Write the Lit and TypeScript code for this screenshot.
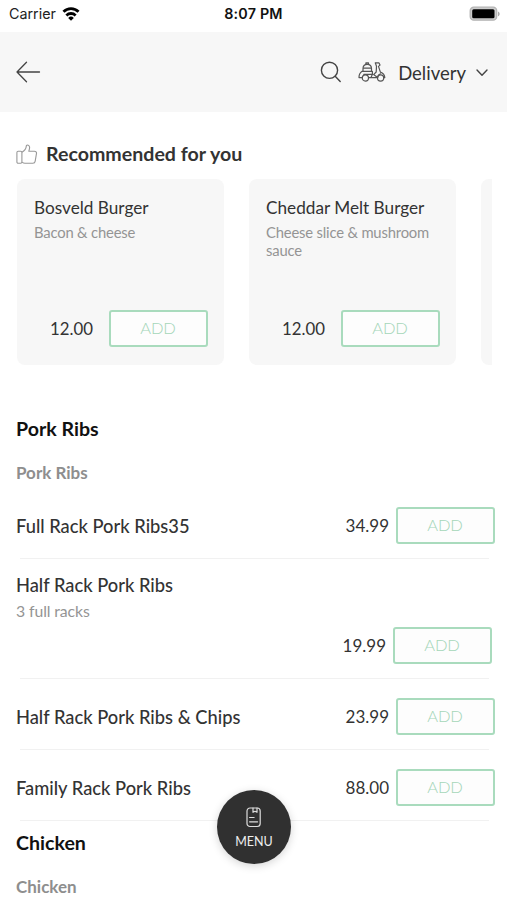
import { LitElement, html, css, svg, nothing } from "lit";
import { customElement, property } from "lit/decorators.js";

interface Dish {
  name: string;
  note?: string;
  price: string;
}

const recommended: Dish[] = [
  { name: "Bosveld Burger", note: "Bacon & cheese", price: "12.00" },
  { name: "Cheddar Melt Burger", note: "Cheese slice & mushroom sauce", price: "12.00" },
];

const ribs: Dish[] = [
  { name: "Full Rack Pork Ribs35", price: "34.99" },
  { name: "Half Rack Pork Ribs", note: "3 full racks", price: "19.99" },
  { name: "Half Rack Pork Ribs & Chips", price: "23.99" },
  { name: "Family Rack Pork Ribs", price: "88.00" },
];

const wifi = svg`<svg width="18" height="14" viewBox="0 0 20 16" fill="none" stroke="#000" stroke-width="3.2">
  <path d="M1.400 5.400a12 12 0 0 1 17.200 0"/><path d="M4.700 9.600a7.600 7.600 0 0 1 10.600 0"/>
  <path d="M10 15.800 6.800 12.500a4.500 4.500 0 0 1 6.400 0Z" fill="#000" stroke="none"/></svg>`;
const battery = svg`<svg width="32" height="16" viewBox="0 0 32 16">
  <rect x="1.200" y="1.200" width="26.500" height="13" rx="3.600" fill="#ccc" stroke="#b4b4b4" stroke-width="1.300"/>
  <rect x="3.200" y="3.200" width="22.300" height="9" rx="1.500" fill="#000"/><path d="M29 5.400c2.200.8 2.200 4 0 4.800z" fill="#aaa"/></svg>`;
const back = svg`<svg width="26" height="24" viewBox="0 0 26 24" fill="none" stroke="#444" stroke-width="1.3" stroke-linecap="round" stroke-linejoin="round">
  <path d="M24.500 12H2M11.500 2.300 2 12l9.500 9.700"/></svg>`;
const search = svg`<svg width="22" height="22" viewBox="0 0 22 22" fill="none" stroke="#444" stroke-width="1.4" stroke-linecap="round">
  <circle cx="9.500" cy="9.300" r="8.100"/><path d="m15.200 15.200 5.000 5.300"/></svg>`;
const scooter = svg`<svg width="28" height="20" viewBox="0 0 28 20" fill="none" stroke="#555" stroke-width="1.200" stroke-linecap="round" stroke-linejoin="round">
  <path d="M5 9V6.400C5 3.800 6.800 2.300 9.200 2.300s4.300 1.500 4.300 4.100V9M7.900 2.300V.900h2.600v1.400M5 6.200h8.500M4.200 9.300h10.200v3H5.800"/>
  <path d="M4.200 9.300C2.200 10.400 1 12.500 1 15.600h3.300M14.400 12.300l-1.400 3.300H10.600M13 15.600h6.600"/>
  <path d="M17.300.900h3.700l1 2.200-1.500 1.300 1.900 5.700c2.800.9 4.200 2.900 4.400 5.500h-1.200M17.300.900l1.200 3.300-.3 5.800-2.600 2.600 4 3c.3-2.100 1.300-3.200 2.800-3.800"/>
  <circle cx="7.400" cy="16" r="3.100"/><circle cx="22.600" cy="16" r="3.100"/></svg>`;
const chevron = svg`<svg width="12" height="8" viewBox="0 0 12 8" fill="none" stroke="#444" stroke-width="1.400" stroke-linecap="round" stroke-linejoin="round"><path d="m1 1 5 5.300L11 1"/></svg>`;
const thumb = svg`<svg width="22" height="21" viewBox="0 0 22 21" fill="none" stroke="#999" stroke-width="1.100" stroke-linejoin="round">
  <rect x=".900" y="7.200" width="5" height="12" rx="1.200"/>
  <path d="M5.900 8.200c3-1.400 4.200-3.700 4.500-6.600.8-1.200 3-.4 3.200 1.500.1 1.600-.4 2.800-.8 4.100h5.600c1.400 0 2.300 1 2.100 2.200l-1.300 7.700c-.2 1.400-1 2.100-2.300 2.100H9c-1.300 0-2.100-.4-3.100-1.100"/></svg>`;
const menuCard = svg`<svg width="16" height="21" viewBox="0 0 16 21" fill="none" stroke="#ddd" stroke-width="1.200" stroke-linecap="round" stroke-linejoin="round">
  <rect x="1" y="1" width="13.200" height="18.500" rx="3"/><path d="M7 1v4.300l2-1 2 1V1M3.600 10.500h4.500M3.600 14.800h8"/></svg>`;

@customElement("add-button")
export class AddButton extends LitElement {
  static styles = css`
    :host { display: block; flex: none; }
    .add {
      display: block; box-sizing: border-box; width: 99px; height: 37px; padding: 0 1px 0 0;
      border: 2px solid #a9dbbd; border-radius: 3px; background: #fdfdfd;
      color: #a5d6b9; font: 300 16.5px/33px Lato, sans-serif; letter-spacing: -.1px;
    }
  `;
  render() {
    return html`<button class="add">ADD</button>`;
  }
}

@customElement("dish-card")
export class DishCard extends LitElement {
  @property({ attribute: false }) dish?: Dish;
  static styles = css`
    :host {
      display: flex; flex-direction: column; flex: none; box-sizing: border-box;
      width: 207px; height: 186px; padding: 17px 16px 18px 17px;
      border-radius: 8px; background: #f7f7f7;
    }
    .name { font-size: 17.2px; line-height: 24px; color: #333; white-space: nowrap; }
    .note { margin-top: 4px; font-size: 14.8px; letter-spacing: -.18px; line-height: 17.5px; color: #949494; }
    .buy { display: flex; align-items: center; justify-content: flex-end; gap: 16px; margin-top: auto; }
    .price { font-size: 16.8px; color: #333; }
  `;
  render() {
    if (!this.dish) return nothing;
    return html`<div class="name">${this.dish.name}</div>
      <div class="note">${this.dish.note}</div>
      <div class="buy"><span class="price">${this.dish.price}</span><add-button></add-button></div>`;
  }
}

@customElement("dish-row")
export class DishRow extends LitElement {
  @property({ attribute: false }) dish?: Dish;
  static styles = css`
    :host { display: block; }
    .row { display: flex; align-items: center; justify-content: space-between; box-sizing: border-box; height: 70px; padding: 5px 12px 0 16px; }
    .tall { display: block; height: 119px; padding: 13px 15px 0 16px; }
    .name { font-size: 18.3px; font-weight: 500; line-height: 26px; color: #333; white-space: nowrap; }
    .note { font-size: 15.8px; letter-spacing: -.1px; line-height: 26px; color: #949494; }
    .buy { display: flex; align-items: center; justify-content: flex-end; gap: 7px; }
    .tall .buy { margin-top: 3px; }
    .price { font-size: 17px; color: #333; }
    .line { height: 1px; margin: 0 18px 0 20px; background: #f1f1f1; }
  `;
  render() {
    const d = this.dish;
    if (!d) return nothing;
    return html`<div class="row ${d.note ? "tall" : ""}">
        <div class="name">${d.name}</div>
        ${d.note ? html`<div class="note">${d.note}</div>` : nothing}
        <div class="buy"><span class="price">${d.price}</span><add-button></add-button></div>
      </div>
      <div class="line"></div>`;
  }
}

@customElement("app-root")
export class AppRoot extends LitElement {
  static styles = css`
    :host { display: block; position: relative; height: 900px; overflow: hidden; background: #fff; font-family: Lato, sans-serif; color: #333; }
    svg { display: block; flex: none; }
    .status { display: grid; grid-template-columns: 1fr auto 1fr; align-items: center; height: 28px; padding: 0 6px 4px 9px; font: 400 14.300px/20px Inter, sans-serif; color: #222; }
    .carrier { display: flex; align-items: center; gap: 6px; }
    .time { font-weight: 600; color: #111; margin-right: 3px; letter-spacing: .2px; }
    .battery { justify-self: end; }
    .bar { display: flex; align-items: center; height: 80px; padding: 0 19px 0 15px; background: #f7f7f7; }
    .search { margin-left: auto; }
    .scooter { margin: 0 12px 0 16px; }
    .mode { font-size: 18.5px; padding-top: 1px; }
    .chevron { margin-left: 10px; padding-top: 2px; }
    .heading { display: flex; align-items: center; gap: 8px; height: 26px; margin: 29px 0 0 16px; }
    .title { font-size: 19.6px; font-weight: 700; line-height: 26px; }
    .cards { display: flex; gap: 25px; margin: 12px 15px 0 17px; overflow: hidden; }
    .section { padding: 0 16px; font-size: 19.6px; font-weight: 700; line-height: 26px; color: #111; }
    .group { margin-top: 18px; padding: 0 16px; font-size: 17px; font-weight: 700; line-height: 26px; color: #8e8e8e; }
    .first { margin-top: 51px; }
    .rows { margin-top: 2px; }
    .next { margin-top: 9px; }
    .menu {
      position: absolute; left: 217px; top: 790px; width: 74px; height: 74px; box-sizing: border-box; padding: 17px 0 0;
      display: flex; flex-direction: column; align-items: center; gap: 5px; border: 0; border-radius: 50%;
      background: #303030; color: #eee; font: 400 12.5px/18px Lato, sans-serif; box-shadow: 0 2px 9px rgba(0,0,0,.17);
    }
  `;
  render() {
    return html`
      <div class="status">
        <div class="carrier"><span>Carrier</span>${wifi}</div>
        <div class="time">8:07 PM</div>
        <div class="battery">${battery}</div>
      </div>
      <header class="bar">
        ${back}
        <div class="search">${search}</div>
        <div class="scooter">${scooter}</div>
        <div class="mode">Delivery</div>
        <div class="chevron">${chevron}</div>
      </header>
      <div class="heading">${thumb}<div class="title">Recommended for you</div></div>
      <div class="cards">
        ${recommended.map((d) => html`<dish-card .dish=${d}></dish-card>`)}
        <dish-card></dish-card>
      </div>
      <div class="section first">Pork Ribs</div>
      <div class="group">Pork Ribs</div>
      <div class="rows">${ribs.map((d) => html`<dish-row .dish=${d}></dish-row>`)}</div>
      <div class="section next">Chicken</div>
      <div class="group">Chicken</div>
      <button class="menu">${menuCard}<span>MENU</span></button>
    `;
  }
}
